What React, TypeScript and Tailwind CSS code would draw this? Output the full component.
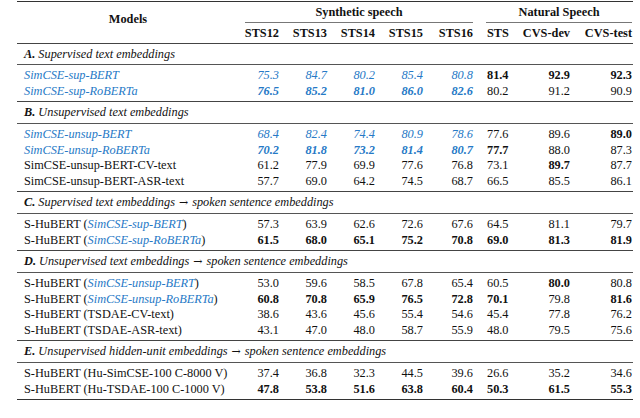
import { FC, ReactNode } from "react";

type Row = {
  name: ReactNode;
  vals: string[];
  bold?: number[];
  blue?: boolean;
};

type Section = {
  letter: string;
  title: ReactNode;
  rows: Row[];
};

const Blue: FC<{ children: ReactNode }> = ({ children }) => (
  <span className="italic text-[#2679c6]">{children}</span>
);

const Arrow = () => (
  <span className="not-italic font-['DejaVu_Serif',serif] text-[11px] leading-none mx-[4px]">→</span>
);

const sections: Section[] = [
  {
    letter: "A.",
    title: "Supervised text embeddings",
    rows: [
      { name: <Blue>SimCSE-sup-BERT</Blue>, vals: ["75.3", "84.7", "80.2", "85.4", "80.8", "81.4", "92.9", "92.3"], bold: [5, 6, 7], blue: true },
      { name: <Blue>SimCSE-sup-RoBERTa</Blue>, vals: ["76.5", "85.2", "81.0", "86.0", "82.6", "80.2", "91.2", "90.9"], bold: [0, 1, 2, 3, 4], blue: true },
    ],
  },
  {
    letter: "B.",
    title: "Unsupervised text embeddings",
    rows: [
      { name: <Blue>SimCSE-unsup-BERT</Blue>, vals: ["68.4", "82.4", "74.4", "80.9", "78.6", "77.6", "89.6", "89.0"], bold: [7], blue: true },
      { name: <Blue>SimCSE-unsup-RoBERTa</Blue>, vals: ["70.2", "81.8", "73.2", "81.4", "80.7", "77.7", "88.0", "87.3"], bold: [0, 1, 2, 3, 4, 5], blue: true },
      { name: "SimCSE-unsup-BERT-CV-text", vals: ["61.2", "77.9", "69.9", "77.6", "76.8", "73.1", "89.7", "87.7"], bold: [6] },
      { name: "SimCSE-unsup-BERT-ASR-text", vals: ["57.7", "69.0", "64.2", "74.5", "68.7", "66.5", "85.5", "86.1"] },
    ],
  },
  {
    letter: "C.",
    title: <>Supervised text embeddings<Arrow />spoken sentence embeddings</>,
    rows: [
      { name: <>S-HuBERT (<Blue>SimCSE-sup-BERT</Blue>)</>, vals: ["57.3", "63.9", "62.6", "72.6", "67.6", "64.5", "81.1", "79.7"] },
      { name: <>S-HuBERT (<Blue>SimCSE-sup-RoBERTa</Blue>)</>, vals: ["61.5", "68.0", "65.1", "75.2", "70.8", "69.0", "81.3", "81.9"], bold: [0, 1, 2, 3, 4, 5, 6, 7] },
    ],
  },
  {
    letter: "D.",
    title: <>Unsupervised text embeddings<Arrow />spoken sentence embeddings</>,
    rows: [
      { name: <>S-HuBERT (<Blue>SimCSE-unsup-BERT</Blue>)</>, vals: ["53.0", "59.6", "58.5", "67.8", "65.4", "60.5", "80.0", "80.8"], bold: [6] },
      { name: <>S-HuBERT (<Blue>SimCSE-unsup-RoBERTa</Blue>)</>, vals: ["60.8", "70.8", "65.9", "76.5", "72.8", "70.1", "79.8", "81.6"], bold: [0, 1, 2, 3, 4, 5, 7] },
      { name: "S-HuBERT (TSDAE-CV-text)", vals: ["38.6", "43.6", "45.6", "55.4", "54.6", "45.4", "77.8", "76.2"] },
      { name: "S-HuBERT (TSDAE-ASR-text)", vals: ["43.1", "47.0", "48.0", "58.7", "55.9", "48.0", "79.5", "75.6"] },
    ],
  },
  {
    letter: "E.",
    title: <>Unsupervised hidden-unit embeddings<Arrow />spoken sentence embeddings</>,
    rows: [
      { name: "S-HuBERT (Hu-SimCSE-100 C-8000 V)", vals: ["37.4", "36.8", "32.3", "44.5", "39.6", "26.6", "35.2", "34.6"] },
      { name: "S-HuBERT (Hu-TSDAE-100 C-1000 V)", vals: ["47.8", "53.8", "51.6", "63.8", "60.4", "50.3", "61.5", "55.3"], bold: [0, 1, 2, 3, 4, 5, 6, 7] },
    ],
  },
];

const grid = "grid grid-cols-[218px_48px_48px_48px_48px_50px_38px_59px_59px]";

// alignment of the 8 value columns
const valCls = [
  "text-right pr-[4px]",
  "text-right pr-[4px]",
  "text-right pr-[4px]",
  "text-right pr-[4px]",
  "text-right pr-[4px]",
  "text-left pl-[10px]",
  "text-right pr-[4px]",
  "text-right pr-[1px]",
];

const headers = ["STS12", "STS13", "STS14", "STS15", "STS16", "STS", "CVS-dev", "CVS-test"];

const DataRow: FC<{ row: Row }> = ({ row }) => (
  <div className={`${grid} h-[15.5px] leading-[15.5px]`}>
    <div className="pl-[7px] whitespace-nowrap">{row.name}</div>
    {row.vals.map((v, i) => {
      const bold = row.bold?.includes(i);
      const blue = row.blue && i < 5;
      return (
        <div
          key={i}
          className={`${valCls[i]} ${bold ? "font-bold" : ""} ${blue ? "italic text-[#2679c6]" : ""}`}
        >
          {v}
        </div>
      );
    })}
  </div>
);

export default function App() {
  return (
    <div
      className="w-[640px] h-[418px] bg-white text-[#111] text-[12.3px] overflow-hidden"
      style={{ fontFamily: '"Liberation Serif", "Times New Roman", serif' }}
    >
      <div className="ml-[17px] w-[616px] mt-[1px] border-t-[1.5px] border-b-[1.5px] border-[#333]">
        {/* header */}
        <div className={`${grid} font-bold`}>
          <div className="row-span-2 flex items-center justify-center pb-[6px] pl-[4px]">Models</div>
          <div className="col-span-5 h-[21px] pl-[10px] pr-[4px] flex flex-col">
            <div className="flex-1 flex items-center justify-center">Synthetic speech</div>
            <div className="h-px bg-[#777]" />
          </div>
          <div className="col-span-3 h-[21px] pl-[9px] pr-[1px] flex flex-col">
            <div className="flex-1 flex items-center justify-center">Natural Speech</div>
            <div className="h-px bg-[#777]" />
          </div>
          {headers.map((h, i) => (
            <div key={h} className={`${valCls[i]} h-[20px] leading-[20px] whitespace-nowrap`}>
              {h}
            </div>
          ))}
        </div>

        {sections.map((s, si) => (
          <div key={s.letter} className="border-t border-[#444]">
            <div
              className={`${si === 0 ? "h-[20px] leading-[20px]" : "h-[21px] leading-[21px]"} pl-[7px] italic whitespace-nowrap`}
            >
              <span className="font-bold">{s.letter}</span> {s.title}
            </div>
            <div className="border-t border-[#555] pt-[3px] pb-[2px]">
              {s.rows.map((r, ri) => (
                <DataRow key={ri} row={r} />
              ))}
            </div>
          </div>
        ))}
      </div>
    </div>
  );
}
